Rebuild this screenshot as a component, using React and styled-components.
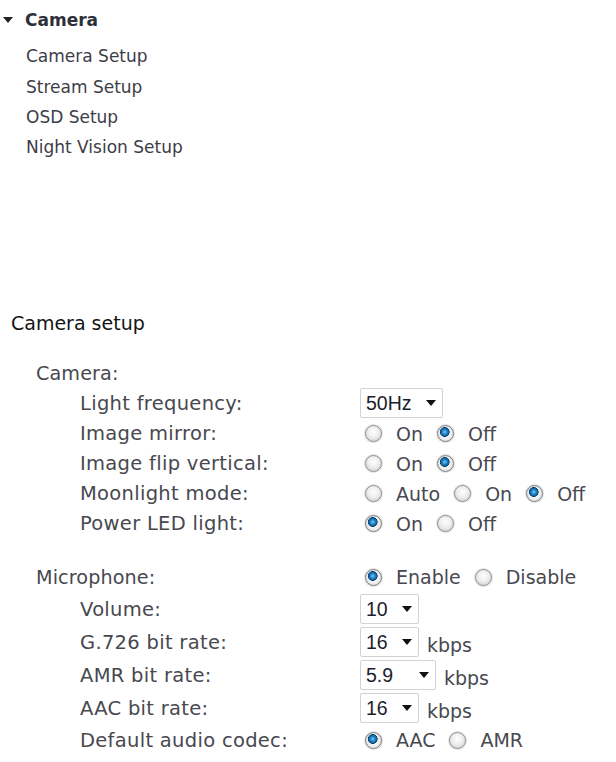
import React from "react";
import styled, { createGlobalStyle } from "styled-components";

const GlobalStyle = createGlobalStyle`
  html, body { margin: 0; padding: 0; background: #ffffff; }
  body { font-family: "DejaVu Sans", Verdana, sans-serif; }
  * { box-sizing: border-box; }
`;

const Page = styled.div`
  width: 616px;
  min-height: 762px;
  display: flex;
  flex-direction: column;
`;

const Nav = styled.nav`
  display: flex;
  flex-direction: column;
  padding-top: 5px;
`;

const NavHeader = styled.div`
  display: flex;
  align-items: center;
  height: 30px;
  padding-left: 3px;
  gap: 12px;
  font-size: 17px;
  font-weight: bold;
  color: #2f2f3a;
`;

const Caret = styled.span`
  width: 0;
  height: 0;
  border-left: 5px solid transparent;
  border-right: 5px solid transparent;
  border-top: 6px solid #222;
  margin-top: -1px;
`;

const NavList = styled.ul`
  list-style: none;
  margin: 6px 0 0;
  padding: 0 0 0 26px;
`;

const NavItem = styled.li`
  height: 30.4px;
  display: flex;
  align-items: center;
  font-size: 17px;
  color: #3d3d48;
`;

const Content = styled.section`
  margin-top: 145px;
  display: flex;
  flex-direction: column;
`;

const Title = styled.h2`
  margin: 0;
  height: 30px;
  display: flex;
  align-items: center;
  padding-left: 11px;
  font-size: 19px;
  font-weight: normal;
  color: #141414;
`;

const Form = styled.div`
  display: flex;
  flex-direction: column;
`;

const Row = styled.div`
  display: grid;
  grid-template-columns: 360px 1fr;
  align-items: center;
  height: ${(p) => p.$h}px;
  margin-top: ${(p) => p.$mt || 0}px;
`;

const Label = styled.span`
  padding-left: ${(p) => (p.$group ? 36 : 80)}px;
  font-size: ${(p) => (p.$group ? 19.2 : 19.5)}px;
  letter-spacing: ${(p) => (p.$group ? 0.1 : 0.3)}px;
  color: #48484f;
  white-space: nowrap;
`;

const Control = styled.div`
  display: flex;
  align-items: center;
`;

const Option = styled.label`
  display: flex;
  align-items: center;
  font-size: 19px;
  color: #48484f;
  margin-right: 9px;
`;

const Radio = styled.input.attrs({ type: "radio" })`
  appearance: none;
  -webkit-appearance: none;
  width: 17px;
  height: 17px;
  margin: 0 14px 0 5px;
  border-radius: 50%;
  border: 1px solid #8f8f8f;
  background: radial-gradient(circle at 50% 40%, #ffffff 0%, #eeeeee 45%, #c9c9c9 100%);
  box-shadow: 0 0 0 1px #e2e2e2;
  flex: none;

  &:checked {
    border-color: #7f7f7f;
    background:
      radial-gradient(circle at 45% 40%, #86c9f2 0px, #2a8ed0 2px, #0b5d98 4px, #073e68 4.6px, transparent 5.1px),
      radial-gradient(circle at 50% 50%, #ffffff 0%, #eeeeee 55%, #c6c6c6 100%);
  }
`;

const SelectWrap = styled.div`
  position: relative;
  display: inline-flex;
  width: ${(p) => p.$w}px;
  height: 30px;

  &::after {
    content: "";
    position: absolute;
    right: 7px;
    top: 12px;
    border-left: 5px solid transparent;
    border-right: 5px solid transparent;
    border-top: 6px solid #111;
    pointer-events: none;
  }
`;

const Select = styled.select`
  appearance: none;
  -webkit-appearance: none;
  width: 100%;
  height: 100%;
  margin: 0;
  padding: 0 0 0 5px;
  border: 1px solid #d2d2d2;
  border-radius: 2px;
  background: #ffffff;
  font-family: "Liberation Sans", Arial, sans-serif;
  font-size: 19.5px;
  color: #1c1c2a;
  outline: none;
`;

const Unit = styled.span`
  margin-left: 8px;
  padding-top: 5px;
  font-size: 19px;
  color: #48484f;
`;

function Drop({ width, value, options }) {
  return (
    <SelectWrap $w={width}>
      <Select defaultValue={value}>
        {options.map((o) => (
          <option key={o} value={o}>
            {o}
          </option>
        ))}
      </Select>
    </SelectWrap>
  );
}

function Radios({ name, options, checked }) {
  return (
    <Control>
      {options.map((o) => (
        <Option key={o}>
          <Radio name={name} defaultChecked={o === checked} />
          {o}
        </Option>
      ))}
    </Control>
  );
}

export default function App() {
  return (
    <Page>
      <GlobalStyle />
      <Nav>
        <NavHeader>
          <Caret />
          Camera
        </NavHeader>
        <NavList>
          <NavItem>Camera Setup</NavItem>
          <NavItem>Stream Setup</NavItem>
          <NavItem>OSD Setup</NavItem>
          <NavItem>Night Vision Setup</NavItem>
        </NavList>
      </Nav>

      <Content>
        <Title>Camera setup</Title>
        <Form>
          <Row $h={28} $mt={22}>
            <Label $group>Camera:</Label>
          </Row>
          <Row $h={31}>
            <Label>Light frequency:</Label>
            <Control>
              <Drop width={83} value="50Hz" options={["50Hz", "60Hz"]} />
            </Control>
          </Row>
          <Row $h={30}>
            <Label>Image mirror:</Label>
            <Radios name="mirror" options={["On", "Off"]} checked="Off" />
          </Row>
          <Row $h={30}>
            <Label>Image flip vertical:</Label>
            <Radios name="flip" options={["On", "Off"]} checked="Off" />
          </Row>
          <Row $h={30}>
            <Label>Moonlight mode:</Label>
            <Radios name="moon" options={["Auto", "On", "Off"]} checked="Off" />
          </Row>
          <Row $h={30}>
            <Label>Power LED light:</Label>
            <Radios name="led" options={["On", "Off"]} checked="On" />
          </Row>

          <Row $h={31} $mt={23}>
            <Label $group>Microphone:</Label>
            <Radios name="mic" options={["Enable", "Disable"]} checked="Enable" />
          </Row>
          <Row $h={33}>
            <Label>Volume:</Label>
            <Control>
              <Drop width={59} value="10" options={["10", "9", "8"]} />
            </Control>
          </Row>
          <Row $h={33}>
            <Label>G.726 bit rate:</Label>
            <Control>
              <Drop width={59} value="16" options={["16", "24", "32"]} />
              <Unit>kbps</Unit>
            </Control>
          </Row>
          <Row $h={33}>
            <Label>AMR bit rate:</Label>
            <Control>
              <Drop width={76} value="5.9" options={["5.9", "7.4", "12.2"]} />
              <Unit>kbps</Unit>
            </Control>
          </Row>
          <Row $h={33}>
            <Label>AAC bit rate:</Label>
            <Control>
              <Drop width={59} value="16" options={["16", "32", "64"]} />
              <Unit>kbps</Unit>
            </Control>
          </Row>
          <Row $h={31}>
            <Label>Default audio codec:</Label>
            <Radios name="codec" options={["AAC", "AMR"]} checked="AAC" />
          </Row>
        </Form>
      </Content>
    </Page>
  );
}
